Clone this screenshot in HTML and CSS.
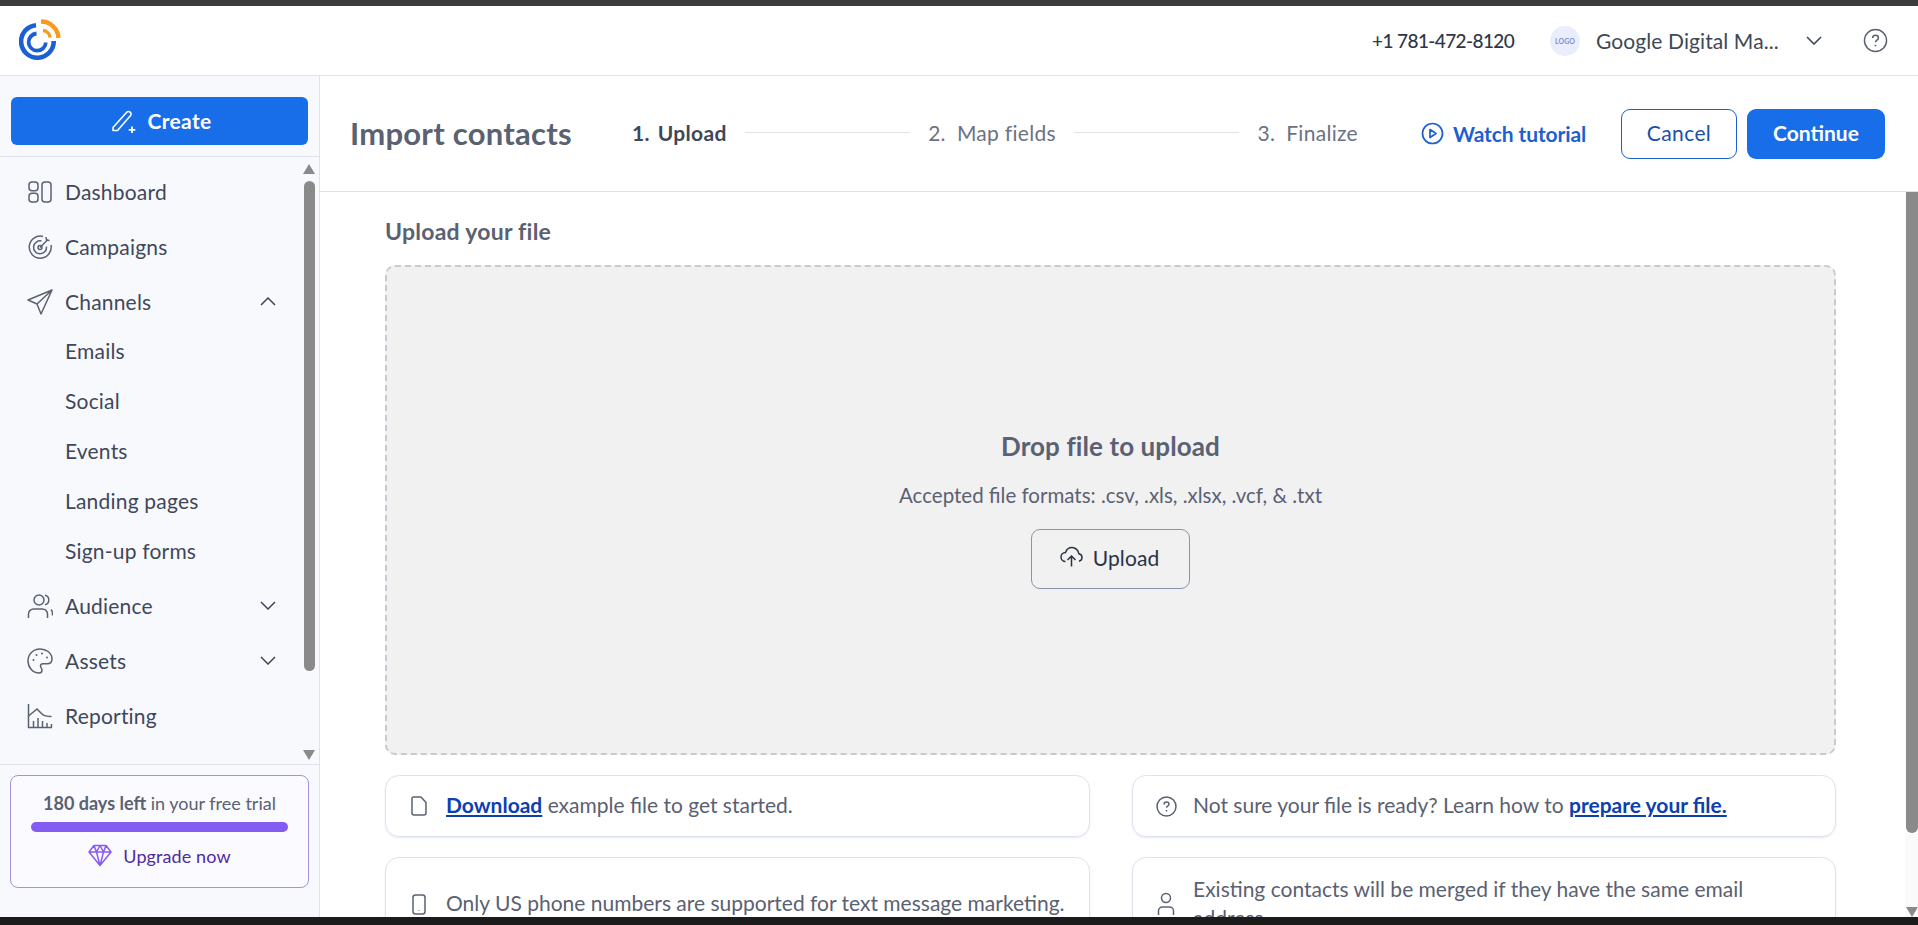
FILE: index.html
```html
<!DOCTYPE html>
<html lang="en">

<head>
    <meta charset="UTF-8">
    <title>Import contacts</title>
    <link rel="stylesheet" href="styles.css">
</head>

<body>
    <div class="topstrip"></div>

    <header class="header">
        <svg class="logo" width="44" height="44" viewBox="0 0 44 44" fill="none">
            <path d="M17 6.2A16.3 16.3 0 1 0 34.7 22" stroke="#1c5fd4" stroke-width="4.6" />
            <path d="M17.5 14.5A8.6 8.6 0 1 0 26.8 23.5" stroke="#1c5fd4" stroke-width="3.8" />
            <path d="M22 2.5A17.5 17.5 0 0 1 39.5 19" stroke="#f79a1e" stroke-width="4.4" />
            <path d="M24 11.5A7.5 7.5 0 0 1 31 18.5" stroke="#f79a1e" stroke-width="3.4" />
        </svg>
        <div class="header-right">
            <span class="phone">+1 781-472-8120</span>
            <span class="account-logo">LOGO</span>
            <span class="account-name">Google Digital Ma...</span>
            <svg class="account-chevron" width="16" height="9" viewBox="0 0 16 9" fill="none" stroke="#3f4759" stroke-width="1.6">
                <path d="M1 1l7 7 7-7" />
            </svg>
            <svg class="help" width="25" height="25" viewBox="0 0 26 26" fill="none" stroke="#5a6172" stroke-width="1.5">
                <circle cx="13" cy="13" r="11.5" />
                <path d="M10 10.5c0-1.8 1.3-3 3-3s3 1.1 3 2.8c0 2.200-3 2.300-3 4.500" stroke-width="1.6" />
                <path d="M13 17.500v1.500" stroke-width="1.8" />
            </svg>
        </div>
    </header>

    <div class="app">
        <aside class="sidebar">
            <div class="create-wrap">
                <button class="create-btn">
                    <svg width="26" height="26" viewBox="0 0 26 26" fill="none" stroke="#fff" stroke-width="1.6" stroke-linejoin="round">
                        <path d="M2 19.500L15.500 4.500c1-1.100 2.500-1.200 3.600-.3s1.300 2.500.3 3.600L6.500 22.500H2z" />
                        <path d="M21 18.500v6.500M17.700 21.800h6.600" stroke-width="1.8" />
                    </svg>
                    Create
                </button>
            </div>

            <div class="nav-scroll">
                <nav class="nav">
                    <a class="nav-item">
                        <svg class="nav-icon" viewBox="0 0 26 26" fill="none" stroke="#5a6172" stroke-width="1.500">
                            <rect x="2" y="3" width="9" height="8.700" rx="3" />
                            <rect x="2" y="14.300" width="9" height="8.700" rx="3" />
                            <rect x="15" y="3" width="9" height="20" rx="3" />
                        </svg>
                        Dashboard
                    </a>
                    <a class="nav-item">
                        <svg class="nav-icon" viewBox="0 0 26 26" fill="none" stroke="#5a6172" stroke-width="1.500">
                            <path d="M16 2.500A11 11 0 1 0 24 11" />
                            <path d="M14.500 7A6.500 6.500 0 1 0 19.500 12.500" />
                            <circle cx="13" cy="13.500" r="2" />
                            <path d="M13 13.500L21 5.500M19 3l.5 3 3 .5" />
                        </svg>
                        Campaigns
                    </a>
                    <a class="nav-item nav-open">
                        <svg class="nav-icon" viewBox="0 0 26 26" fill="none" stroke="#5a6172" stroke-width="1.500" stroke-linejoin="round">
                            <path d="M25 1L1 11l9 4 4 10zM25 1L10 15" />
                        </svg>
                        Channels
                        <svg class="nav-chevron" viewBox="0 0 16 9" fill="none" stroke="#3f4759" stroke-width="1.500"><path d="M1 8l7-7 7 7" /></svg>
                    </a>
                    <a class="nav-sub">Emails</a>
                    <a class="nav-sub">Social</a>
                    <a class="nav-sub">Events</a>
                    <a class="nav-sub">Landing pages</a>
                    <a class="nav-sub">Sign-up forms</a>
                    <a class="nav-item nav-after-sub">
                        <svg class="nav-icon" viewBox="0 0 26 26" fill="none" stroke="#5a6172" stroke-width="1.500">
                            <circle cx="12" cy="7" r="5" />
                            <path d="M1.500 25v-4c0-3 2.500-5 5-5h9c2.500 0 5 2 5 5v4" />
                            <path d="M18 2.200c2.500.5 3.800 2.500 3.800 4.800s-1.300 4.300-3.800 4.800M24 16.500c1 1 1.500 2.500 1.500 4v2" />
                        </svg>
                        Audience
                        <svg class="nav-chevron" viewBox="0 0 16 9" fill="none" stroke="#3f4759" stroke-width="1.500"><path d="M1 1l7 7 7-7" /></svg>
                    </a>
                    <a class="nav-item">
                        <svg class="nav-icon" viewBox="0 0 26 26" fill="none" stroke="#5a6172" stroke-width="1.500">
                            <path d="M13 1C6 1 1 6.500 1 13s5 12 11 12c2 0 3-1.300 3-2.800 0-2.200-1.500-2.500-1.500-4.200 0-1.300 1-2.200 2.500-2.200h4c3 0 5-2 5-4.800C25 5 19.500 1 13 1z" />
                            <circle cx="6.500" cy="12" r="1" fill="#5a6172" stroke="none" />
                            <circle cx="9.500" cy="7" r="1" fill="#5a6172" stroke="none" />
                            <circle cx="15" cy="5.500" r="1" fill="#5a6172" stroke="none" />
                            <circle cx="20" cy="9.500" r="1" fill="#5a6172" stroke="none" />
                        </svg>
                        Assets
                        <svg class="nav-chevron" viewBox="0 0 16 9" fill="none" stroke="#3f4759" stroke-width="1.500"><path d="M1 1l7 7 7-7" /></svg>
                    </a>
                    <a class="nav-item">
                        <svg class="nav-icon" viewBox="0 0 26 26" fill="none" stroke="#5a6172" stroke-width="1.500">
                            <path d="M1.500 1v23.500H25" />
                            <path d="M1.500 13L10 6l5 5c2 2 5 2.500 9.500 2.500" />
                            <path d="M6.500 24v-6M11 24v-9M15.500 24v-6M20 24v-4M24.500 24v-3" />
                        </svg>
                        Reporting
                    </a>
                </nav>
                <div class="scroll-track side-track">
                    <span class="arrow-up"></span>
                    <span class="thumb"></span>
                    <span class="arrow-down"></span>
                </div>
            </div>

            <div class="trial-wrap">
                <div class="trial-card">
                    <p class="trial-text"><b>180 days left</b> in your free trial</p>
                    <div class="trial-bar"></div>
                    <a class="upgrade">
                        <svg width="24" height="23" viewBox="0 0 24 23" fill="none" stroke="#8a5cf0" stroke-width="1.500" stroke-linejoin="round">
                            <path d="M6 1.500h12l5 6.500-11 13.500L1 8zM1 8h22M8.500 8L12 21.500 15.500 8 12 1.500 8.500 8zM6 1.500L8.500 8M18 1.500L15.500 8" />
                        </svg>
                        Upgrade now
                    </a>
                </div>
            </div>
        </aside>

        <main class="main">
            <div class="toolbar">
                <h1 class="title">Import contacts</h1>
                <ol class="steps">
                    <li class="step step-active"><span>1.</span>Upload</li>
                    <li class="step-line"></li>
                    <li class="step"><span>2.</span>Map fields</li>
                    <li class="step-line"></li>
                    <li class="step"><span>3.</span>Finalize</li>
                </ol>
                <a class="tutorial">
                    <svg width="23" height="23" viewBox="0 0 23 23" fill="none" stroke="#1d5fd0" stroke-width="1.700" stroke-linejoin="round">
                        <circle cx="11.500" cy="11.500" r="10" />
                        <path d="M9 7.500l6 4-6 4z" />
                    </svg>
                    Watch tutorial
                </a>
                <button class="btn-cancel">Cancel</button>
                <button class="btn-continue">Continue</button>
            </div>

            <div class="content-wrap">
                <section class="content">
                    <h2 class="section-title">Upload your file</h2>
                    <div class="dropzone">
                        <h3 class="drop-title">Drop file to upload</h3>
                        <p class="drop-text">Accepted file formats: .csv, .xls, .xlsx, .vcf, &amp; .txt</p>
                        <button class="btn-upload">
                            <svg width="23" height="22" viewBox="0 0 23 22" fill="none" stroke="#2b3244" stroke-width="1.500">
                                <path d="M5.500 15.500C3 15.500 1 13.500 1 11s2-4.500 4.500-4.500C6.500 3.500 9 1.500 12 1.500c3.500 0 6.500 2.800 6.800 6.200 2 .3 3.200 2 3.200 3.800 0 1.800-1.200 3.300-3 3.800" />
                                <path d="M11.500 20.500v-10M7.500 14l4-4 4 4" />
                            </svg>
                            Upload
                        </button>
                    </div>

                    <div class="tips">
                        <div class="tip">
                            <span class="tip-icon">
                                <svg width="16" height="20" viewBox="0 0 16 20" fill="none" stroke="#5a6172" stroke-width="1.500" stroke-linejoin="round">
                                    <path d="M2.500 1H10l5 5.500V17c0 1.100-.9 2-2 2H3c-1.100 0-2-.9-2-2V2.500C1 1.700 1.700 1 2.500 1z" />
                                </svg>
                            </span>
                            <p><a class="tip-link">Download</a> example file to get started.</p>
                        </div>
                        <div class="tip">
                            <span class="tip-icon">
                                <svg width="21" height="21" viewBox="0 0 21 21" fill="none" stroke="#5a6172" stroke-width="1.500">
                                    <circle cx="10.500" cy="10.500" r="9.500" />
                                    <path d="M8 8.500c0-1.400 1-2.400 2.500-2.400s2.500 1 2.500 2.200c0 1.800-2.500 1.800-2.500 3.500" />
                                    <path d="M10.500 14v1.500" />
                                </svg>
                            </span>
                            <p>Not sure your file is ready? Learn how to <a class="tip-link">prepare your file.</a></p>
                        </div>
                        <div class="tip tip-tall">
                            <span class="tip-icon">
                                <svg width="14" height="21" viewBox="0 0 14 21" fill="none" stroke="#5a6172" stroke-width="1.500">
                                    <rect x="1" y="1" width="12" height="19" rx="2.500" />
                                    <path d="M7 16v.500" />
                                </svg>
                            </span>
                            <p>Only US phone numbers are supported for text message marketing.</p>
                        </div>
                        <div class="tip tip-tall">
                            <span class="tip-icon">
                                <svg width="18" height="24" viewBox="0 0 18 24" fill="none" stroke="#5a6172" stroke-width="1.500">
                                    <circle cx="9" cy="6" r="4.500" />
                                    <path d="M1.500 23v-4c0-2.500 2-4 4-4h7c2 0 4 1.500 4 4v4" />
                                </svg>
                            </span>
                            <p>Existing contacts will be merged if they have the same email address.</p>
                        </div>
                    </div>
                </section>
                <div class="scroll-track main-track">
                    <span class="thumb main-thumb"></span>
                    <span class="arrow-down"></span>
                </div>
            </div>
        </main>
    </div>

    <div class="bottomstrip"></div>
</body>

</html>
```

FILE: styles.css
```css
* {
    box-sizing: border-box;
}

html,
body {
    height: 100%;
    margin: 0;
    overflow: hidden;
}

body {
    display: flex;
    flex-direction: column;
    background: #fff;
    font-family: Lato, "Open Sans", sans-serif;
    color: #3f4759;
}

button {
    font-family: inherit;
    cursor: pointer;
}

p,
h1,
h2,
h3,
ol {
    margin: 0;
    padding: 0;
}

.topstrip {
    height: 6px;
    background: #3c3c3c;
    flex: none;
}

.bottomstrip {
    height: 8px;
    background: #1b1b1c;
    flex: none;
}

/* header */
.header {
    flex: none;
    height: 70px;
    display: flex;
    align-items: center;
    justify-content: space-between;
    padding: 0 30px 0 19px;
    border-bottom: 1px solid #dfe2ea;
}

.header-right {
    display: flex;
    align-items: center;
}

.phone {
    font-size: 19px;
    letter-spacing: -.6px;
    font-weight: 500;
    color: #2f3648;
    width: 178px;
}

.account-logo {
    width: 30px;
    height: 30px;
    border-radius: 50%;
    background: #e9edfc;
    color: #7d8fd8;
    font-size: 7px;
    font-weight: 700;
    display: flex;
    align-items: center;
    justify-content: center;
}

.account-name {
    font-size: 21px;
    letter-spacing: .1px;
    margin-left: 16px;
    width: 210px;
    white-space: nowrap;
    color: #3f4759;
}

.help {
    margin-left: 41px;
}

/* layout */
.app {
    flex: 1;
    min-height: 0;
    display: grid;
    grid-template-columns: 320px 1fr;
}

.sidebar {
    display: flex;
    flex-direction: column;
    background: #f8f9fd;
    border-right: 1px solid #dfe2ea;
    min-height: 0;
}

.create-wrap {
    flex: none;
    height: 81px;
    padding: 21px 11px 0;
    border-bottom: 1px solid #dfe2ea;
}

.create-btn {
    width: 297px;
    height: 48px;
    border: 0;
    border-radius: 6px;
    background: #186de9;
    color: #fff;
    font-size: 21px;
    letter-spacing: .3px;
    font-weight: 700;
    display: flex;
    align-items: center;
    justify-content: center;
    gap: 11px;
    padding: 0 0 1px 3px;
}

.nav-scroll {
    flex: none;
    height: 608px;
    display: flex;
    border-bottom: 1px solid #dfe2ea;
}

.nav {
    flex: 1;
    padding-top: 7px;
}

.nav-item {
    display: flex;
    align-items: center;
    height: 55px;
    padding-left: 27px;
    font-size: 21px;
    letter-spacing: .2px;
    color: #3f4759;
}

.nav-open {
    margin-bottom: -3px;
}

.nav-after-sub {
    margin-top: 2px;
}

.nav-icon {
    width: 26px;
    height: 26px;
    margin-right: 12px;
}

.nav-chevron {
    width: 16px;
    height: 9px;
    margin-left: auto;
    margin-right: 25px;
}

.nav-sub {
    display: flex;
    align-items: center;
    height: 50px;
    padding: 0 0 2px 65px;
    font-size: 21px;
    letter-spacing: .2px;
    color: #3f4759;
}

.scroll-track {
    flex: none;
    display: flex;
    flex-direction: column;
    align-items: center;
}

.side-track {
    width: 16px;
    margin-right: 2px;
    padding-top: 7px;
}

.arrow-up,
.arrow-down {
    width: 0;
    height: 0;
    flex: none;
    border-left: 6.500px solid transparent;
    border-right: 6.500px solid transparent;
}

.arrow-up {
    border-bottom: 10px solid #8a8a8a;
}

.arrow-down {
    border-top: 10px solid #8a8a8a;
}

.thumb {
    display: block;
    width: 11px;
    height: 490px;
    margin: 7px 0 79px;
    background: #8a8a8a;
    border-radius: 6px;
}

.trial-wrap {
    flex: 1;
    padding: 10px 10px 0;
}

.trial-card {
    width: 299px;
    height: 113px;
    border: 1px solid #a98fe0;
    border-radius: 8px;
    background: #fbfaff;
    padding: 16px 20px 0;
    text-align: center;
}

.trial-text {
    font-size: 18px;
    line-height: 22px;
    color: #5a6172;
}

.trial-bar {
    height: 10px;
    margin-top: 8px;
    border-radius: 5px;
    background: #835cf2;
}

.upgrade {
    display: flex;
    align-items: center;
    justify-content: center;
    gap: 11px;
    margin-top: 12px;
    font-size: 18px;
    letter-spacing: .1px;
    color: #4f2aa0;
}

/* main */
.main {
    display: flex;
    flex-direction: column;
    min-width: 0;
    min-height: 0;
}

.toolbar {
    flex: none;
    height: 116px;
    display: flex;
    align-items: center;
    padding: 0 33px 0 30px;
    border-bottom: 1px solid #dfe2ea;
}

.title {
    font-size: 31px;
    letter-spacing: .25px;
    font-weight: 700;
    color: #5a6172;
    width: 282px;
    margin-top: -2px;
}

.steps {
    list-style: none;
    display: flex;
    align-items: center;
    width: 726px;
    margin-top: -2px;
}

.step {
    font-size: 21px;
    letter-spacing: .3px;
    color: #6b7283;
    white-space: nowrap;
}

.step span {
    margin-right: 11px;
}

.step-active {
    font-weight: 700;
    color: #3f4759;
}

.step-active span {
    margin-right: 8px;
}

.step-line {
    flex: 1;
    height: 1px;
    margin: 0 18px;
    background: #dfe2ea;
}

.tutorial {
    display: flex;
    align-items: center;
    gap: 9px;
    margin-left: 63px;
    font-size: 21px;
    letter-spacing: -.1px;
    font-weight: 700;
    color: #1d5fd0;
    width: 200px;
    white-space: nowrap;
}

.btn-cancel,
.btn-continue {
    height: 50px;
    border-radius: 9px;
    font-size: 21px;
    padding: 0 0 2px;
}

.btn-cancel {
    width: 116px;
    background: #fff;
    border: 1px solid #1d5fd0;
    color: #1b4fa8;
    letter-spacing: .4px;
}

.btn-continue {
    width: 138px;
    margin-left: 10px;
    border: 0;
    background: #186de9;
    color: #fff;
    font-weight: 700;
}

.content-wrap {
    flex: 1;
    min-height: 0;
    display: flex;
    overflow: hidden;
}

.content {
    flex: 1;
    min-width: 0;
    padding: 25px 69px 0 65px;
}

.main-track {
    width: 13px;
    background: #fafafa;
}

.main-thumb {
    width: 12px;
    height: 643px;
    margin: 0 0 74px;
    border-radius: 0 0 6px 6px;
}

.section-title {
    font-size: 23px;
    letter-spacing: .25px;
    font-weight: 700;
    line-height: 28px;
    color: #5a6172;
}

.dropzone {
    height: 490px;
    margin-top: 20px;
    background: #f1f1f2;
    border: 2px dashed #c8cad3;
    border-radius: 10px;
    display: flex;
    flex-direction: column;
    align-items: center;
    padding-top: 163px;
}

.drop-title {
    font-size: 26px;
    letter-spacing: .1px;
    font-weight: 700;
    line-height: 32px;
    color: #5a6172;
}

.drop-text {
    margin-top: 21px;
    font-size: 20.500px;
    line-height: 24px;
    color: #5a6172;
}

.btn-upload {
    display: flex;
    align-items: center;
    justify-content: center;
    gap: 10px;
    width: 159px;
    height: 60px;
    margin-top: 22px;
    padding: 0 2px 4px 0;
    background: transparent;
    border: 1px solid #8a93ad;
    border-radius: 9px;
    font-size: 21px;
    letter-spacing: .1px;
    color: #2b3244;
}

.tips {
    display: grid;
    grid-template-columns: 705px 704px;
    column-gap: 42px;
    row-gap: 20px;
    margin-top: 20px;
}

.tip {
    display: flex;
    align-items: center;
    gap: 16px;
    height: 62px;
    padding: 0 20px 0 22px;
    border: 1px solid #dfe2ef;
    border-radius: 14px;
    box-shadow: 0 1px 2px #e4e7f1;
    font-size: 21px;
    line-height: 29px;
    color: #5a6172;
}

.tip p {
    margin-top: -3px;
}

.tip-tall {
    height: 94px;
}

.tip-icon {
    flex: none;
    width: 22px;
    display: flex;
    justify-content: center;
}

.tip-link {
    font-weight: 700;
    color: #0d3fb0;
    text-decoration: underline;
}
```
